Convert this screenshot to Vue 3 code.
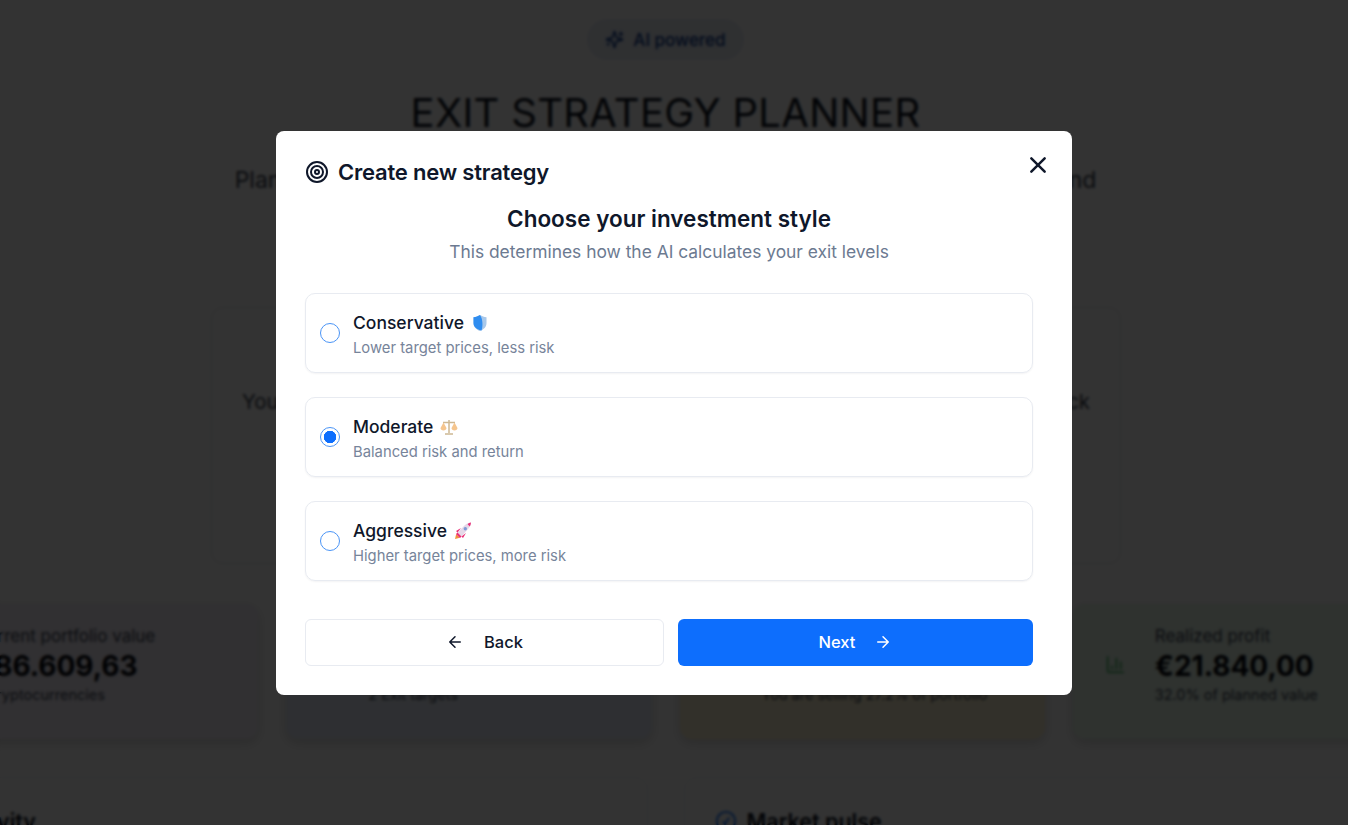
<template>
  <div class="page">
    <section class="hero">
      <div class="pill">
        <svg class="pill-icon" viewBox="0 0 24 24" fill="none" stroke="currentColor" stroke-width="2" stroke-linecap="round" stroke-linejoin="round">
          <path d="M9.94 15.5A2 2 0 0 0 8.5 14.06l-6.14-1.58a.5.5 0 0 1 0-.96L8.5 9.94A2 2 0 0 0 9.94 8.5l1.58-6.14a.5.5 0 0 1 .96 0l1.58 6.14a2 2 0 0 0 1.44 1.44l6.14 1.58a.5.5 0 0 1 0 .96l-6.14 1.58a2 2 0 0 0-1.44 1.44l-1.58 6.14a.5.5 0 0 1-.96 0z" />
          <path d="M20 3v4M22 5h-4M4 17v2M5 18H3" />
        </svg>
        AI powered
      </div>
      <h1>EXIT STRATEGY PLANNER</h1>
      <p class="lead">Plan your crypto exits with clear price targets, smart profit levels, risk limits and</p>
    </section>

    <section class="empty-card">
      <p>You have no exit strategy yet. Create your first plan and keep your price targets on track</p>
    </section>

    <section class="stats">
      <div v-for="stat in stats" :key="stat.label" class="stat" :class="stat.tone">
        <svg class="stat-icon" viewBox="0 0 24 24" fill="none" stroke="currentColor" stroke-width="1.5" stroke-linecap="round" stroke-linejoin="round">
          <path d="M3 3v16a2 2 0 0 0 2 2h16M18 17V9M13 17V5M8 17v-3" />
        </svg>
        <div>
          <div class="stat-label">{{ stat.label }}</div>
          <div class="stat-value">{{ stat.value }}</div>
          <div class="stat-note">{{ stat.note }}</div>
        </div>
      </div>
    </section>

    <section class="lower">
      <div class="lower-card">
        <h2>
          <svg class="pulse-icon" viewBox="0 0 24 24" fill="none" stroke="currentColor" stroke-width="2" stroke-linecap="round" stroke-linejoin="round">
            <path d="M22 12h-4l-3 9L9 3l-3 9H2" />
          </svg>
          Activity
        </h2>
      </div>
      <div class="lower-card">
        <h2>
          <svg class="pulse-icon" viewBox="0 0 24 24" fill="none" stroke="currentColor" stroke-width="2" stroke-linecap="round" stroke-linejoin="round">
            <circle cx="12" cy="12" r="10" />
            <path d="m9 13 2 2 4-6" />
          </svg>
          Market pulse
        </h2>
      </div>
    </section>
  </div>

  <div class="overlay">
    <div class="modal">
      <header class="modal-head">
        <svg class="target" viewBox="0 0 24 24" fill="none" stroke="currentColor" stroke-width="2">
          <circle cx="12" cy="12" r="10" />
          <circle cx="12" cy="12" r="6" />
          <circle cx="12" cy="12" r="2" />
        </svg>
        <span class="modal-title">Create new strategy</span>
        <button class="close" aria-label="Close">
          <svg viewBox="0 0 24 24" fill="none" stroke="currentColor" stroke-width="3" stroke-linecap="round">
            <path d="M4 4l16 16M20 4 4 20" />
          </svg>
        </button>
      </header>

      <h3>Choose your investment style</h3>
      <p class="hint">This determines how the AI calculates your exit levels</p>

      <div class="options">
        <label v-for="opt in options" :key="opt.id" class="option" @click="selected = opt.id">
          <span class="radio" :class="{ checked: selected === opt.id }"></span>
          <span class="option-text">
            <span class="option-title">
              {{ opt.title }}
              <svg v-if="opt.id === 'conservative'" class="emoji" viewBox="0 0 18 18">
                <path d="M9 1c2 1.300 4 2 6.500 2.200V9c0 4-2.800 6.500-6.500 8-3.700-1.500-6.500-4-6.500-8V3.200C5 3 7 2.300 9 1z" fill="#a8c8ea" />
                <path d="M9 1C7 2.300 5 3 2.500 3.200V9c0 3.400 2.500 6.200 8 7.400C12 13 12 5 9 1z" fill="#2f8df0" />
              </svg>
              <svg v-else-if="opt.id === 'moderate'" class="emoji" viewBox="0 0 18 18" fill="none">
                <path d="M9 2v13M5 16h8M3 4.500h12" stroke="#cdb893" stroke-width="1.500" />
                <path d="M.5 10 3.500 4.500 6.500 10c0 1.600-1.300 2.500-3 2.500s-3-.9-3-2.500zM11.500 10l3-5.500 3 5.500c0 1.600-1.300 2.500-3 2.500s-3-.9-3-2.500z" fill="#f5c58e" />
              </svg>
              <svg v-else class="emoji" viewBox="0 0 18 18">
                <path d="M1 17l1.200-5 3.800 3.800z" fill="#f2913d" />
                <path d="M3.500 10.500 11 3c1.800-1.700 3.800-2.400 6-2.500-.1 2.200-.8 4.200-2.500 6L7.500 14.500z" fill="#e5d8e8" />
                <path d="M17 .5c-.1 1.400-.5 2.700-1.200 3.900L13.600 2.200C14.600 1.100 15.700.7 17 .5zM2 9l5-3-3.500 4.500zM9 16l3-5-4.500 3.500zM3.500 10.500l4 4L6 16l-4-4z" fill="#ea2f78" />
                <circle cx="11.300" cy="6.700" r="1.700" fill="#7d9bd6" />
              </svg>
            </span>
            <span class="option-desc">{{ opt.desc }}</span>
          </span>
        </label>
      </div>

      <footer class="actions">
        <button class="btn btn-back">
          <svg viewBox="0 0 24 24" fill="none" stroke="currentColor" stroke-width="2" stroke-linecap="round" stroke-linejoin="round">
            <path d="m12 19-7-7 7-7M19 12H5" />
          </svg>
          Back
        </button>
        <button class="btn btn-next">
          Next
          <svg viewBox="0 0 24 24" fill="none" stroke="currentColor" stroke-width="2" stroke-linecap="round" stroke-linejoin="round">
            <path d="M5 12h14M12 5l7 7-7 7" />
          </svg>
        </button>
      </footer>
    </div>
  </div>
</template>

<script setup>
import { ref } from 'vue'

const selected = ref('moderate')

const options = [
  { id: 'conservative', title: 'Conservative', desc: 'Lower target prices, less risk' },
  { id: 'moderate', title: 'Moderate', desc: 'Balanced risk and return' },
  { id: 'aggressive', title: 'Aggressive', desc: 'Higher target prices, more risk' }
]

const stats = [
  { label: 'Current portfolio value', value: '€86.609,63', note: '5 cryptocurrencies', tone: 'purple' },
  { label: 'Planned exit value', value: '€68.250,00', note: '2 Exit targets', tone: 'blue' },
  { label: 'Portfolio share', value: '27.2%', note: 'You are selling 27.2% of portfolio', tone: 'amber' },
  { label: 'Realized profit', value: '€21.840,00', note: '32.0% of planned value', tone: 'green' }
]
</script>

<style>
html,
body {
  overflow: hidden;
  background: #fff;
}
</style>

<style scoped>
.page {
  width: 100%;
  height: 825px;
  overflow: hidden;
  background: #fff;
  font-family: Inter, "Liberation Sans", sans-serif;
  color: #0b1220;
}

.hero {
  display: flex;
  flex-direction: column;
  align-items: center;
  width: 1331px;
  padding-top: 19px;
}

.pill {
  display: flex;
  align-items: center;
  gap: 9px;
  height: 41px;
  padding: 0 18px;
  border-radius: 21px;
  background: #e8edf6;
  color: #0d3a8c;
  font-size: 17px;
  font-weight: 500;
}

.pill-icon {
  width: 19px;
  height: 19px;
}

h1 {
  margin: 28px 0 0;
  font-size: 40px;
  line-height: 50px;
  font-weight: 400;
  letter-spacing: 0.3px;
  white-space: nowrap;
}

.lead {
  margin: 26px 0 0;
  font-size: 23px;
  line-height: 32px;
  color: #333b4a;
  white-space: nowrap;
}

.empty-card {
  width: 910px;
  height: 257px;
  margin: 111px 0 0 211px;
  padding-top: 77px;
  box-sizing: border-box;
  border: 1px solid #dde1e8;
  border-radius: 12px;
  text-align: center;
}

.empty-card p {
  margin: 0;
  font-size: 20.400px;
  line-height: 34px;
  color: #333b4a;
  white-space: nowrap;
}

.stats {
  display: flex;
  gap: 28px;
  width: 1545px;
  margin: 40px 0 0 -107px;
}

.stat {
  display: flex;
  gap: 29px;
  flex: 1;
  height: 135px;
  padding: 20px 0 0 32px;
  box-sizing: border-box;
  border-radius: 12px;
  box-shadow: 0 4px 12px rgba(0, 0, 0, 0.16);
}

.stat-icon {
  width: 21px;
  height: 21px;
  margin-top: 30px;
  flex-shrink: 0;
}

.purple { background: #f3eef8; }
.blue { background: #e6ecf7; }
.amber { background: #fbf1cf; }
.green { background: #e8f8ea; }

.purple .stat-icon { color: #7b3fe0; }
.blue .stat-icon { color: #0d6efd; }
.amber .stat-icon { color: #d99a00; }
.green .stat-icon { color: #18a33e; }

.stat-label,
.stat-note {
  color: #3e4757;
  white-space: nowrap;
}

.stat-label {
  font-size: 17px;
  line-height: 24px;
}

.stat-value {
  font-size: 28px;
  line-height: 36px;
  font-weight: 700;
  color: #05080f;
  white-space: nowrap;
}

.stat-note {
  font-size: 14.500px;
  line-height: 22px;
}

.lower {
  display: flex;
  gap: 36px;
  width: 1545px;
  margin: 38px 0 0 -107px;
}

.lower-card {
  flex: 1;
  height: 120px;
  padding: 31px 30px;
  box-sizing: border-box;
  border: 1px solid #eef0f4;
  border-radius: 12px;
}

h2 {
  display: flex;
  align-items: center;
  gap: 10px;
  margin: 0;
  font-size: 21.500px;
  line-height: 24px;
  font-weight: 600;
}

.pulse-icon {
  width: 22px;
  height: 22px;
  color: #0d6efd;
}

.overlay {
  position: fixed;
  inset: 0;
  display: flex;
  align-items: center;
  justify-content: center;
  background: rgba(0, 0, 0, 0.8);
  backdrop-filter: blur(1.500px);
  font-family: Inter, "Liberation Sans", sans-serif;
}

.modal {
  width: 796px;
  height: 564px;
  padding: 26px 39px 0 29px;
  box-sizing: border-box;
  border-radius: 8px;
  background: #fff;
  color: #0f172a;
}

.modal-head {
  display: flex;
  align-items: center;
  height: 30px;
}

.target {
  width: 24px;
  height: 24px;
  margin-right: 9px;
  margin-top: 1px;
}

.modal-title {
  font-size: 22px;
  font-weight: 600;
  letter-spacing: -0.2px;
}

.close {
  display: flex;
  width: 20px;
  height: 20px;
  margin: -14px -15px 0 auto;
  padding: 0;
  border: 0;
  background: none;
  color: #0f172a;
}

h3 {
  margin: 17px 0 0;
  font-size: 22.500px;
  line-height: 30px;
  font-weight: 600;
  text-align: center;
}

.hint {
  margin: 6px 0 0;
  font-size: 17.400px;
  line-height: 24px;
  color: #6c7a91;
  text-align: center;
}

.options {
  display: flex;
  flex-direction: column;
  gap: 24px;
  margin-top: 29px;
}

.option {
  display: flex;
  align-items: center;
  gap: 13px;
  height: 80px;
  padding: 0 14px;
  box-sizing: border-box;
  border: 1px solid #e8ebf1;
  border-radius: 10px;
  box-shadow: 0 1px 2px rgba(15, 23, 42, 0.05);
  cursor: pointer;
}

.radio {
  width: 20px;
  height: 20px;
  box-sizing: border-box;
  border: 1.500px solid #4a94f6;
  border-radius: 50%;
  background: #fff;
  flex-shrink: 0;
}

.radio.checked {
  background: radial-gradient(circle, #0d6efd 0 6px, #fff 6.500px);
}

.option-text {
  display: flex;
  flex-direction: column;
  gap: 4px;
  margin-top: 5px;
}

.option-title {
  display: flex;
  align-items: center;
  gap: 7px;
  font-size: 17.500px;
  line-height: 22px;
  font-weight: 500;
}

.emoji {
  width: 18px;
  height: 18px;
  margin-top: -1px;
}

.option-desc {
  font-size: 14.800px;
  line-height: 20px;
  color: #77849a;
}

.actions {
  display: flex;
  gap: 14px;
  margin-top: 38px;
}

.btn {
  display: flex;
  align-items: center;
  justify-content: center;
  height: 47px;
  padding: 0;
  box-sizing: border-box;
  border-radius: 6px;
  font-family: inherit;
  font-size: 16.500px;
  font-weight: 500;
  cursor: pointer;
}

.btn svg {
  width: 18px;
  height: 18px;
}

.btn-back {
  gap: 20px;
  width: 359px;
  border: 1px solid #e8ebf1;
  background: #fff;
  color: #0f172a;
}

.btn-next {
  gap: 19px;
  width: 355px;
  border: 0;
  background: #0d6efd;
  color: #fff;
}
</style>
